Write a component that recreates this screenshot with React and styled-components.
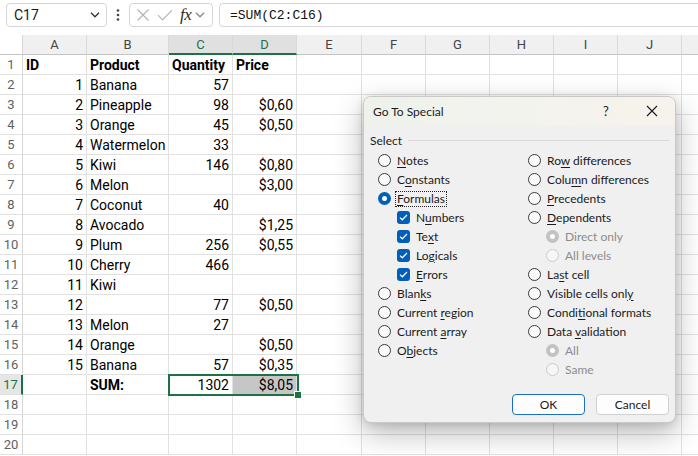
import React from 'react';
import styled, { createGlobalStyle, css } from 'styled-components';

const Global = createGlobalStyle`
  html, body { margin: 0; padding: 0; background: #fff; overflow: hidden; }
  body { font-family: Roboto, "Liberation Sans", sans-serif; }
  * { box-sizing: border-box; }
`;

const GREEN = '#1e7145';
const BLUE = '#005fb8';

const Page = styled.div`
  position: relative;
  width: 698px;
  height: 456px;
  overflow: hidden;
  background: #fff;
`;

/* ---------- formula bar ---------- */
const FormulaBar = styled.div`
  display: flex;
  align-items: flex-start;
  height: 35px;
  padding: 3px 0 0 6px;
  overflow: hidden;
`;
const Box = styled.div`
  flex: none;
  height: 24px;
  border: 1px solid #d6d6d6;
  border-radius: 4px;
  background: #fff;
  display: flex;
  align-items: center;
`;
const NameBox = styled(Box)`
  width: 101px;
  justify-content: space-between;
  padding: 0 6px 0 7px;
  font-size: 14px;
  color: #1a1a1a;
`;
const Dots = styled.div`
  flex: none;
  width: 22px;
  height: 24px;
  display: flex;
  align-items: center;
  justify-content: center;
`;
const FxBox = styled(Box)`
  width: 84px;
  padding-left: 6px;
  gap: 7px;
`;
const FxLabel = styled.span`
  font-family: "Liberation Serif", serif;
  font-style: italic;
  font-size: 17px;
  color: #2b2b2b;
  margin-right: -3px;
  letter-spacing: -0.5px;
`;
const FormulaInput = styled(Box)`
  margin-left: 6px;
  width: 500px;
  padding-left: 10px;
  font-family: "Liberation Mono", monospace;
  font-size: 13px;
  color: #111;
`;

/* ---------- sheet ---------- */
const Sheet = styled.div`
  position: relative;
  display: grid;
  grid-template-columns: 23px 64px 82px 64px 64px 65px 64px 64px 64px 64px 64px 64px;
  grid-auto-rows: 20px;
`;
const Corner = styled.div`
  border-right: 1px solid #d6d6d6;
  border-bottom: 1px solid #c4c4c4;
  background: #fff;
`;
const ColHead = styled.div`
  background: ${p => (p.$active ? '#e0e0e0' : '#f0f0f0')};
  border-right: 1px solid #d9d9d9;
  border-bottom: ${p => (p.$active ? `2px solid ${GREEN}` : '1px solid #c4c4c4')};
  color: ${p => (p.$active ? GREEN : '#444')};
  font-size: 13px;
  text-align: center;
  line-height: 19px;
`;
const RowHead = styled.div`
  border-right: 1px solid #d6d6d6;
  border-bottom: 1px solid #e1e1e1;
  color: #616161;
  font-size: 13px;
  text-align: center;
  line-height: 20px;
  background: #fff;
  ${p =>
    p.$active &&
    css`
      background: #e6e6e6;
      color: ${GREEN};
      border-right: 2px solid ${GREEN};
    `}
`;
const Cell = styled.div`
  border-right: 1px solid #e1e1e1;
  border-bottom: 1px solid #e1e1e1;
  font-size: 14px;
  line-height: 20px;
  padding: 0 3px;
  white-space: nowrap;
  overflow: hidden;
  color: #000;
  text-align: ${p => (p.$num ? 'right' : 'left')};
  font-weight: ${p => (p.$bold ? 700 : 400)};
  background: ${p => p.$fill || 'transparent'};
`;
const Selection = styled.div`
  position: absolute;
  left: 168px;
  top: 339px;
  width: 131px;
  height: 22px;
  border: 2px solid ${GREEN};
  pointer-events: none;
`;
const FillHandle = styled.div`
  position: absolute;
  right: -5px;
  bottom: -5px;
  width: 6px;
  height: 6px;
  background: ${GREEN};
  border: 1px solid #fff;
  box-sizing: content-box;
`;

/* ---------- dialog ---------- */
const Dialog = styled.div`
  position: absolute;
  left: 363px;
  top: 96px;
  width: 313px;
  height: 327px;
  border-radius: 8px;
  border: 1px solid #c9c9c9;
  background: #f0f0f0;
  box-shadow: 0 10px 30px rgba(0, 0, 0, 0.28), 0 2px 8px rgba(0, 0, 0, 0.12);
  overflow: hidden;
  display: flex;
  flex-direction: column;
  font-family: Lato, "Open Sans", sans-serif;
  font-size: 12px;
  color: #1b1b1b;
`;
const TitleBar = styled.div`
  height: 28px;
  flex: none;
  display: flex;
  align-items: center;
  padding-left: 9px;
  background: linear-gradient(90deg, #eef2ea 0%, #f3f3ee 50%, #f7f2ec 100%);
`;
const Title = styled.div`
  flex: 1;
`;
const TitleButton = styled.div`
  width: 46px;
  height: 28px;
  display: flex;
  align-items: center;
  justify-content: center;
  font-size: 13px;
`;
const Body = styled.div`
  flex: 1;
  display: flex;
  flex-direction: column;
  padding: 7px 6px 7px 6px;
`;
const GroupHeader = styled.div`
  display: flex;
  align-items: center;
  gap: 6px;
  height: 16px;
`;
const GroupLine = styled.div`
  flex: 1;
  border-top: 1px solid #d8d8d8;
`;
const Options = styled.div`
  display: grid;
  grid-template-columns: 150px 1fr;
  margin: 3px 0 0 8px;
`;
const Column = styled.div`
  display: flex;
  flex-direction: column;
`;
const Option = styled.div`
  display: flex;
  align-items: center;
  height: 19px;
  gap: 5px;
  padding-left: ${p => p.$indent || 0}px;
  color: ${p => (p.$disabled ? '#8c8c8c' : '#1b1b1b')};
  white-space: nowrap;
`;
const Label = styled.span`
  padding: 0 1px;
  margin-left: -1px;
  border: 1px dotted ${p => (p.$focus ? '#222' : 'transparent')};
  line-height: 14px;
  u {
    text-decoration: underline;
    text-underline-offset: 2px;
    text-decoration-thickness: 1px;
  }
`;
const Radio = styled.span`
  width: 13px;
  height: 13px;
  flex: none;
  border-radius: 50%;
  display: flex;
  align-items: center;
  justify-content: center;
  ${p =>
    p.$checked
      ? css`
          background: ${p.$disabled ? '#c2c2c2' : BLUE};
          &::after {
            content: '';
            width: 5px;
            height: 5px;
            border-radius: 50%;
            background: #fff;
          }
        `
      : css`
          background: ${p.$disabled ? '#f6f6f6' : '#fafafa'};
          border: 1px solid ${p.$disabled ? '#cacaca' : '#3a3a3a'};
        `}
`;
const Check = styled.span`
  width: 13px;
  height: 13px;
  flex: none;
  border-radius: 3px;
  background: ${BLUE};
  display: flex;
  align-items: center;
  justify-content: center;
`;
const Footer = styled.div`
  margin-top: auto;
  display: flex;
  justify-content: flex-end;
  gap: 11px;
`;
const Button = styled.div`
  width: 73px;
  height: 21px;
  border-radius: 4px;
  background: #fdfdfd;
  border: 1px solid ${p => (p.$primary ? '#1a6fc4' : '#d0d0d0')};
  display: flex;
  align-items: center;
  justify-content: center;
  font-size: 12px;
`;

/* ---------- data ---------- */
const cols = ['A', 'B', 'C', 'D', 'E', 'F', 'G', 'H', 'I', 'J', ''];
const data = [
  ['ID', 'Product', 'Quantity', 'Price'],
  [1, 'Banana', 57, ''],
  [2, 'Pineapple', 98, '$0,60'],
  [3, 'Orange', 45, '$0,50'],
  [4, 'Watermelon', 33, ''],
  [5, 'Kiwi', 146, '$0,80'],
  [6, 'Melon', '', '$3,00'],
  [7, 'Coconut', 40, ''],
  [8, 'Avocado', '', '$1,25'],
  [9, 'Plum', 256, '$0,55'],
  [10, 'Cherry', 466, ''],
  [11, 'Kiwi', '', ''],
  [12, '', 77, '$0,50'],
  [13, 'Melon', 27, ''],
  [14, 'Orange', '', '$0,50'],
  [15, 'Banana', 57, '$0,35'],
  ['', 'SUM:', 1302, '$8,05'],
  ['', '', '', ''],
  ['', '', '', ''],
  ['', '', '', ''],
];

const Chevron = ({ color = '#333', w = 10 }) => (
  <svg width={w} height="6" viewBox="0 0 10 6">
    <path d="M1 0.8l4 4 4-4" fill="none" stroke={color} strokeWidth="1.3" />
  </svg>
);

const CheckMark = () => (
  <svg width="9" height="7" viewBox="0 0 9 7">
    <path d="M1 3.6l2.3 2.2L8 1" fill="none" stroke="#fff" strokeWidth="1.3" />
  </svg>
);

const Opt = ({ type = 'radio', checked, disabled, indent, focus, children }) => (
  <Option $indent={indent} $disabled={disabled}>
    {type === 'check' ? (
      <Check>
        <CheckMark />
      </Check>
    ) : (
      <Radio $checked={checked} $disabled={disabled} />
    )}
    <Label $focus={focus}>{children}</Label>
  </Option>
);

export default function App() {
  return (
    <Page>
      <Global />
      <FormulaBar>
        <NameBox>
          C17
          <Chevron />
        </NameBox>
        <Dots>
          <svg width="4" height="14" viewBox="0 0 4 14">
            <circle cx="2" cy="2.5" r="1.3" fill="#444" />
            <circle cx="2" cy="7" r="1.3" fill="#444" />
            <circle cx="2" cy="11.5" r="1.3" fill="#444" />
          </svg>
        </Dots>
        <FxBox>
          <svg width="14" height="14" viewBox="0 0 14 14">
            <path d="M1.5 1.5l11 11M12.5 1.5l-11 11" stroke="#b4b4b4" strokeWidth="1.2" fill="none" />
          </svg>
          <svg width="16" height="12" viewBox="0 0 16 12">
            <path d="M1 6.2l4.6 4.6L15 1.2" stroke="#b4b4b4" strokeWidth="1.2" fill="none" />
          </svg>
          <FxLabel>fx</FxLabel>
          <Chevron color="#888" w={10} />
        </FxBox>
        <FormulaInput>=SUM(C2:C16)</FormulaInput>
      </FormulaBar>

      <Sheet>
        <Corner />
        {cols.map((c, i) => (
          <ColHead key={i} $active={c === 'C' || c === 'D'}>
            {c}
          </ColHead>
        ))}
        {data.map((row, r) => {
          const n = r + 1;
          const isHead = n === 1;
          const isSum = n === 17;
          return (
            <React.Fragment key={n}>
              <RowHead $active={isSum}>{n}</RowHead>
              <Cell $num={!isHead} $bold={isHead}>{row[0]}</Cell>
              <Cell $bold={isHead || isSum}>{row[1]}</Cell>
              <Cell $num={!isHead} $bold={isHead}>{row[2]}</Cell>
              <Cell $num={!isHead} $bold={isHead} $fill={isSum ? '#c6c6c6' : undefined}>
                {row[3]}
              </Cell>
              {Array.from({ length: 7 }).map((_, k) => (
                <Cell key={k} />
              ))}
            </React.Fragment>
          );
        })}
        <Selection>
          <FillHandle />
        </Selection>
      </Sheet>

      <Dialog>
        <TitleBar>
          <Title>Go To Special</Title>
          <TitleButton>?</TitleButton>
          <TitleButton>
            <svg width="12" height="12" viewBox="0 0 12 12">
              <path d="M1 1l10 10M11 1L1 11" stroke="#1b1b1b" strokeWidth="1.1" fill="none" />
            </svg>
          </TitleButton>
        </TitleBar>
        <Body>
          <GroupHeader>
            Select
            <GroupLine />
          </GroupHeader>
          <Options>
            <Column>
              <Opt><u>N</u>otes</Opt>
              <Opt>C<u>o</u>nstants</Opt>
              <Opt checked focus><u>F</u>ormulas</Opt>
              <Opt type="check" indent={19}>N<u>u</u>mbers</Opt>
              <Opt type="check" indent={19}>Te<u>x</u>t</Opt>
              <Opt type="check" indent={19}>Lo<u>g</u>icals</Opt>
              <Opt type="check" indent={19}><u>E</u>rrors</Opt>
              <Opt>Blan<u>k</u>s</Opt>
              <Opt>Current <u>r</u>egion</Opt>
              <Opt>Current <u>a</u>rray</Opt>
              <Opt>O<u>b</u>jects</Opt>
            </Column>
            <Column>
              <Opt>Ro<u>w</u> differences</Opt>
              <Opt>Colu<u>m</u>n differences</Opt>
              <Opt><u>P</u>recedents</Opt>
              <Opt><u>D</u>ependents</Opt>
              <Opt indent={18} checked disabled>Direct only</Opt>
              <Opt indent={18} disabled>All levels</Opt>
              <Opt>La<u>s</u>t cell</Opt>
              <Opt>Visible cells onl<u>y</u></Opt>
              <Opt>Condi<u>t</u>ional formats</Opt>
              <Opt>Data <u>v</u>alidation</Opt>
              <Opt indent={18} checked disabled>All</Opt>
              <Opt indent={18} disabled>Same</Opt>
            </Column>
          </Options>
          <Footer>
            <Button $primary>OK</Button>
            <Button>Cancel</Button>
          </Footer>
        </Body>
      </Dialog>
    </Page>
  );
}
